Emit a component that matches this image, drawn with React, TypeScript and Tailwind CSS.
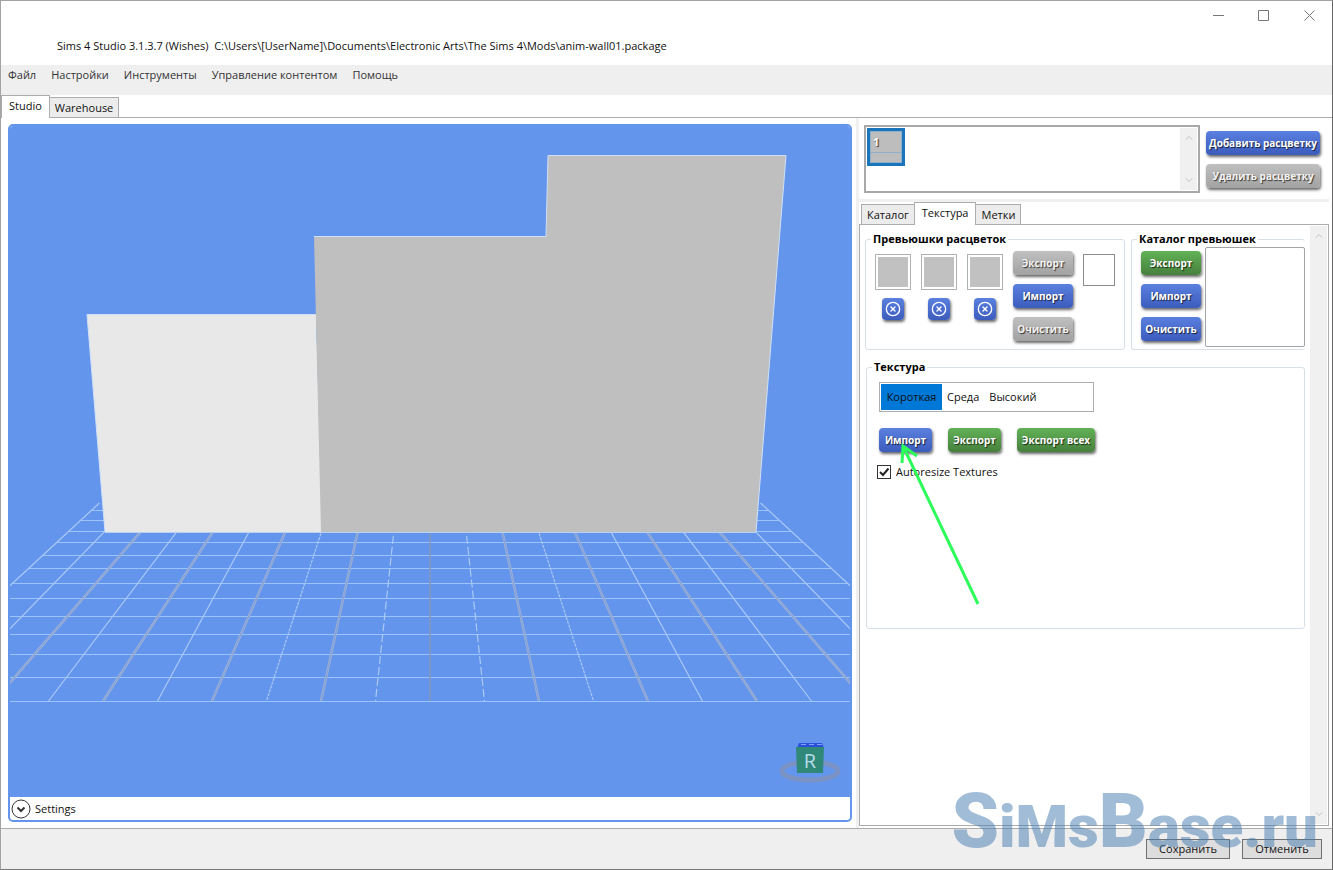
import React from 'react';
import { ChevronDown, ChevronUp, CircleX } from 'lucide-react';

type Tone = 'blue' | 'green' | 'gray';

interface GlossyButtonProps {
  children: React.ReactNode;
  tone?: Tone;
  className?: string;
  label?: string;
}

const tones: Record<Tone, string> = {
  blue: 'from-[#5b80e0] to-[#3c5cbc] text-white',
  green: 'from-[#62b257] to-[#47803d] text-white',
  gray: 'from-[#c0c0c0] to-[#a2a2a2] text-[#f4f4f4]',
};

function GlossyButton({ children, tone = 'blue', className = '', label }: GlossyButtonProps) {
  return (
    <button
      type="button"
      aria-label={label}
      className={`flex items-center justify-center rounded bg-gradient-to-b text-[10px] font-bold whitespace-nowrap shadow-[1px_2px_3px_rgba(0,0,0,0.6)] text-shadow-[1px_1px_1px_rgba(0,0,0,0.7)] ${label ? 'size-[22px]' : 'h-6'} ${tones[tone]} ${className}`}
    >
      {children}
    </button>
  );
}

interface TabProps {
  children: React.ReactNode;
  active?: boolean;
}

function Tab({ children, active = false }: TabProps) {
  return (
    <button
      type="button"
      role="tab"
      aria-selected={active}
      className={
        active
          ? 'relative z-10 -mx-px -mb-px h-[23px] border border-b-0 border-[#acacac] bg-white px-[7px] pb-0.5'
          : 'h-5 border border-b-0 border-[#acacac] bg-[#ececec] px-[5px]'
      }
    >
      {children}
    </button>
  );
}

function ScrollBar() {
  return (
    <div className="flex w-[17px] shrink-0 flex-col items-center justify-between bg-[#f0f0f0] py-1 text-[#c4c4c4]">
      <ChevronUp size={12} />
      <ChevronDown size={12} />
    </div>
  );
}

const menu = ['Файл', 'Настройки', 'Инструменты', 'Управление контентом', 'Помощь'];

const rows = [510, 520, 531, 542, 555, 568, 583, 598, 616, 634, 654, 677, 701];
const columns = Array.from({ length: 21 }, (_, i) => i - 10);

// distance between neighbouring floor lines at a given height
const spacing = (y: number) => 36.2 + ((y - 532) * 18.4) / 170;

function Scene() {
  return (
    <svg viewBox="10 126 840 671" preserveAspectRatio="xMidYMid slice" className="block min-h-0 w-full flex-1 bg-[#6495ed]">
      <g stroke="#9cc4f8">
        {rows.map((y) => {
          const half = Math.min(420, spacing(y) * 10);
          return <line key={y} x1={430 - half} x2={430 + half} y1={y + 0.5} y2={y + 0.5} />;
        })}
      </g>
      {columns.map((k) => {
        const line = { x1: 430 + spacing(503) * k, y1: 503, x2: 430 + spacing(701) * k, y2: 701 };
        if (k === 0) return <line key={k} {...line} stroke="#8296bf" strokeWidth="1.6" />;
        if (k % 2 === 0 && Math.abs(k) < 10) {
          return (
            <g key={k}>
              <line {...line} stroke="#a6b4d0" strokeWidth="2.4" />
              <line {...line} stroke="#7199e2" strokeWidth="0.8" />
            </g>
          );
        }
        return (
          <line
            key={k}
            {...line}
            stroke="#a9caf6"
            strokeWidth="1.2"
            strokeDasharray={Math.abs(k) === 1 ? '8 3' : Math.abs(k) === 3 ? '3 1' : undefined}
          />
        );
      })}
      <path d="M87 314H316L322 532H105Z" fill="#e8e8e8" />
      <path d="M314 236H546L548 155H786L756 532H321Z" fill="#bfbfbf" />
      <path d="M105 532L87 314.500H315M314 236.500H546L548 155.500H786L756 532" fill="none" stroke="#cfe0f6" />
      <path d="M105 532.500H756" stroke="#b5d2f4" />
      <ellipse cx="810" cy="771" rx="28" ry="9" fill="none" stroke="#7b92c4" strokeWidth="5" />
      <path d="M799 743h23l2 5h-27z" fill="#2b50dc" />
      <path d="M801 744.500h5m3 0h5m3 0h5" stroke="#7fa0f4" />
      <path d="M796 747h28l-1 26h-26z" fill="#2f8878" />
      <text x="810" y="768" textAnchor="middle" fill="#b6dcea" fontSize="20">
        R
      </text>
    </svg>
  );
}

function Viewport() {
  return (
    <section className="my-1.5 ml-[7px] flex min-w-0 flex-1 flex-col overflow-hidden rounded-[5px] border-2 border-[#6495ed] bg-white">
      <Scene />
      <button type="button" className="flex h-[23px] items-center gap-1 pl-px">
        <svg width="20" height="20" viewBox="0 0 20 20" fill="none" stroke="#333">
          <circle cx="10" cy="10" r="9" />
          <path d="M6.500 8.500L10 12l3.500-3.500" strokeWidth="2" />
        </svg>
        Settings
      </button>
    </section>
  );
}

function SwatchList() {
  return (
    <div className="flex gap-1.5 border-b-[3px] border-[#f0f0f0] pt-[7px] pr-[9px] pb-1.5 pl-[5px]">
      <div className="flex h-[68px] min-w-0 flex-1 justify-between border-2 border-[#a9a9a9] p-px">
        <button
          type="button"
          className="flex size-[38px] flex-col border-3 border-[#1a75bb] bg-[#bdbdbd] text-left leading-4 font-bold text-white text-shadow-[1px_1px_1px_rgba(0,0,0,0.8)]"
        >
          <span className="flex h-[22px] w-full items-center border border-[#8fb0cc] pl-0.5">1</span>
          <span className="w-full flex-1 border border-t-0 border-[#8fb0cc]" />
        </button>
        <ScrollBar />
      </div>
      <div className="flex w-[114px] flex-col gap-[9px] pt-1.5">
        <GlossyButton>Добавить расцветку</GlossyButton>
        <GlossyButton tone="gray">Удалить расцветку</GlossyButton>
      </div>
    </div>
  );
}

function Thumbnails() {
  return (
    <fieldset className="min-w-0 flex-1 rounded-[3px] border border-[#d9e0e5] pr-[9px] pl-[9px]">
      <legend className="-ml-1 px-0.5 font-bold text-black">Превьюшки расцветок</legend>
      <div className="flex justify-between">
        <div className="flex gap-2.5 pt-[7px]">
          {[1, 2, 3].map((n) => (
            <div key={n} className="flex flex-col items-center gap-2">
              <div className="size-9 border border-[#adb2b5] p-0.5">
                <div className="size-full bg-[#c1c1c1]" />
              </div>
              <GlossyButton label={`Очистить ${n}`}>
                <CircleX size={16} />
              </GlossyButton>
            </div>
          ))}
        </div>
        <div className="flex w-[60px] flex-col gap-[9px] pt-1 pb-2">
          <GlossyButton tone="gray">Экспорт</GlossyButton>
          <GlossyButton>Импорт</GlossyButton>
          <GlossyButton tone="gray">Очистить</GlossyButton>
        </div>
        <div className="mt-[7px] size-8 border border-[#8c8c8c]" />
      </div>
    </fieldset>
  );
}

function CatalogPreview() {
  return (
    <fieldset className="w-[174px] rounded-[3px] border border-r-0 border-[#d9e0e5] pl-[9px]">
      <legend className="-ml-1 px-0.5 font-bold text-black">Каталог превьюшек</legend>
      <div className="flex gap-1">
        <div className="flex w-[60px] flex-col gap-[9px] pt-1 pb-2">
          <GlossyButton tone="green">Экспорт</GlossyButton>
          <GlossyButton>Импорт</GlossyButton>
          <GlossyButton>Очистить</GlossyButton>
        </div>
        <div className="h-[100px] flex-1 rounded-xs border border-[#a4a4a4]" />
      </div>
    </fieldset>
  );
}

function TexturePanel() {
  return (
    <fieldset className="relative mt-[9px] ml-px min-h-[270px] rounded-[3px] border border-[#d9e0e5] pl-3">
      <legend className="-ml-[7px] px-0.5 font-bold text-black">Текстура</legend>
      <div role="listbox" className="mt-[7px] flex h-[30px] w-[215px] border border-[#abadb3] p-px">
        <button type="button" role="option" aria-selected="true" className="w-[61px] bg-[#0078d7]">
          Короткая
        </button>
        <button type="button" role="option" aria-selected="false" className="px-[5px]">
          Среда
        </button>
        <button type="button" role="option" aria-selected="false" className="px-[5px]">
          Высокий
        </button>
      </div>
      <div className="mt-4 flex gap-4">
        <GlossyButton className="w-[53px]">Импорт</GlossyButton>
        <GlossyButton tone="green" className="w-[53px]">
          Экспорт
        </GlossyButton>
        <GlossyButton tone="green" className="w-[78px]">
          Экспорт всех
        </GlossyButton>
      </div>
      <label className="mt-3 -ml-0.5 flex items-center gap-[5px]">
        <span className="relative flex">
          <input
            type="checkbox"
            defaultChecked
            className="peer size-[14px] appearance-none border border-[#333] bg-white"
          />
          <svg viewBox="0 0 14 14" className="pointer-events-none absolute inset-0 hidden peer-checked:block" fill="none" stroke="#222" strokeWidth="2">
            <path d="M3 7l3 3 5.500-6.500" />
          </svg>
        </span>
        Autoresize Textures
      </label>
      <svg width="90" height="166" viewBox="0 0 90 166" className="pointer-events-none absolute top-[66px] left-7" fill="none" stroke="#2dfc5a" strokeWidth="3">
        <path d="M83 163L8 5M7 22L8 5l14 10" />
      </svg>
    </fieldset>
  );
}

function Inspector() {
  return (
    <aside className="mr-0.5 flex w-[474px] shrink-0 flex-col border-l-[3px] border-[#f0f0f0] pr-px pb-0.5">
      <SwatchList />
      <div role="tablist" className="flex items-end pl-0.5">
        <Tab>Каталог</Tab>
        <Tab active>Текстура</Tab>
        <Tab>Метки</Tab>
      </div>
      <div className="flex flex-1 border border-[#acacac] p-px">
        <div className="min-w-0 flex-1 pt-[5px] pr-[5px] pl-1">
          <div className="flex gap-1.5">
            <Thumbnails />
            <CatalogPreview />
          </div>
          <TexturePanel />
        </div>
        <ScrollBar />
      </div>
    </aside>
  );
}

function TitleBar() {
  return (
    <header className="flex h-16 justify-between">
      <h1 className="self-end pb-[11px] pl-14 whitespace-pre">
        {'Sims 4 Studio 3.1.3.7 (Wishes)  C:\\Users\\[UserName]\\Documents\\Electronic Arts\\The Sims 4\\Mods\\anim-wall01.package'}
      </h1>
      <div className="flex h-7 text-[#777]">
        <button type="button" aria-label="Свернуть" className="flex w-[45px] items-center justify-center">
          <svg width="11" height="11" stroke="currentColor">
            <path d="M0 5.500h11" />
          </svg>
        </button>
        <button type="button" aria-label="Развернуть" className="flex w-[45px] items-center justify-center">
          <svg width="11" height="11" fill="none" stroke="currentColor">
            <path d="M.5.5h10v10H.5z" />
          </svg>
        </button>
        <button type="button" aria-label="Закрыть" className="flex w-[46px] items-center justify-center">
          <svg width="11" height="11" stroke="currentColor">
            <path d="M.5.5l10 10M10.500.5l-10 10" />
          </svg>
        </button>
      </div>
    </header>
  );
}

function Watermark() {
  return (
    <div className="pointer-events-none absolute right-3.5 bottom-0.5 font-['Roboto','Liberation_Sans',sans-serif] text-[60px] leading-[80px] font-black whitespace-nowrap text-[#4179ae]/50">
      <span className="text-[76px]">S</span>i<span className="text-[60px]">M</span>s
      <span className="text-[76px]">B</span>ase.ru
    </div>
  );
}

export default function App() {
  return (
    <div className="flex min-h-screen flex-col border border-[#a3a3a3] border-r-[#666] border-b-[#777] bg-white font-['Open_Sans','Noto_Sans',sans-serif] text-[11px] leading-4 text-[#111]">
      <TitleBar />
      <nav className="flex h-[30px] items-start gap-[15px] bg-[#efefef] pt-0.5 pl-[7px]">
        {menu.map((item) => (
          <button key={item} type="button" className="text-[#333]">
            {item}
          </button>
        ))}
      </nav>
      <div role="tablist" className="flex items-end pl-px">
        <Tab active>Studio</Tab>
        <Tab>Warehouse</Tab>
      </div>
      <main className="flex flex-1 border-y border-[#acacac]">
        <Viewport />
        <div className="w-1 shrink-0" />
        <Inspector />
      </main>
      <footer className="relative flex h-10 items-start justify-end gap-3 bg-[#efefef] pt-2.5 pr-2.5">
        <button type="button" className="h-5 w-[84px] border border-[#707070] bg-[#ddd]">
          Сохранить
        </button>
        <button type="button" className="h-5 w-20 border border-[#707070] bg-[#ddd]">
          Отменить
        </button>
        <Watermark />
      </footer>
    </div>
  );
}
